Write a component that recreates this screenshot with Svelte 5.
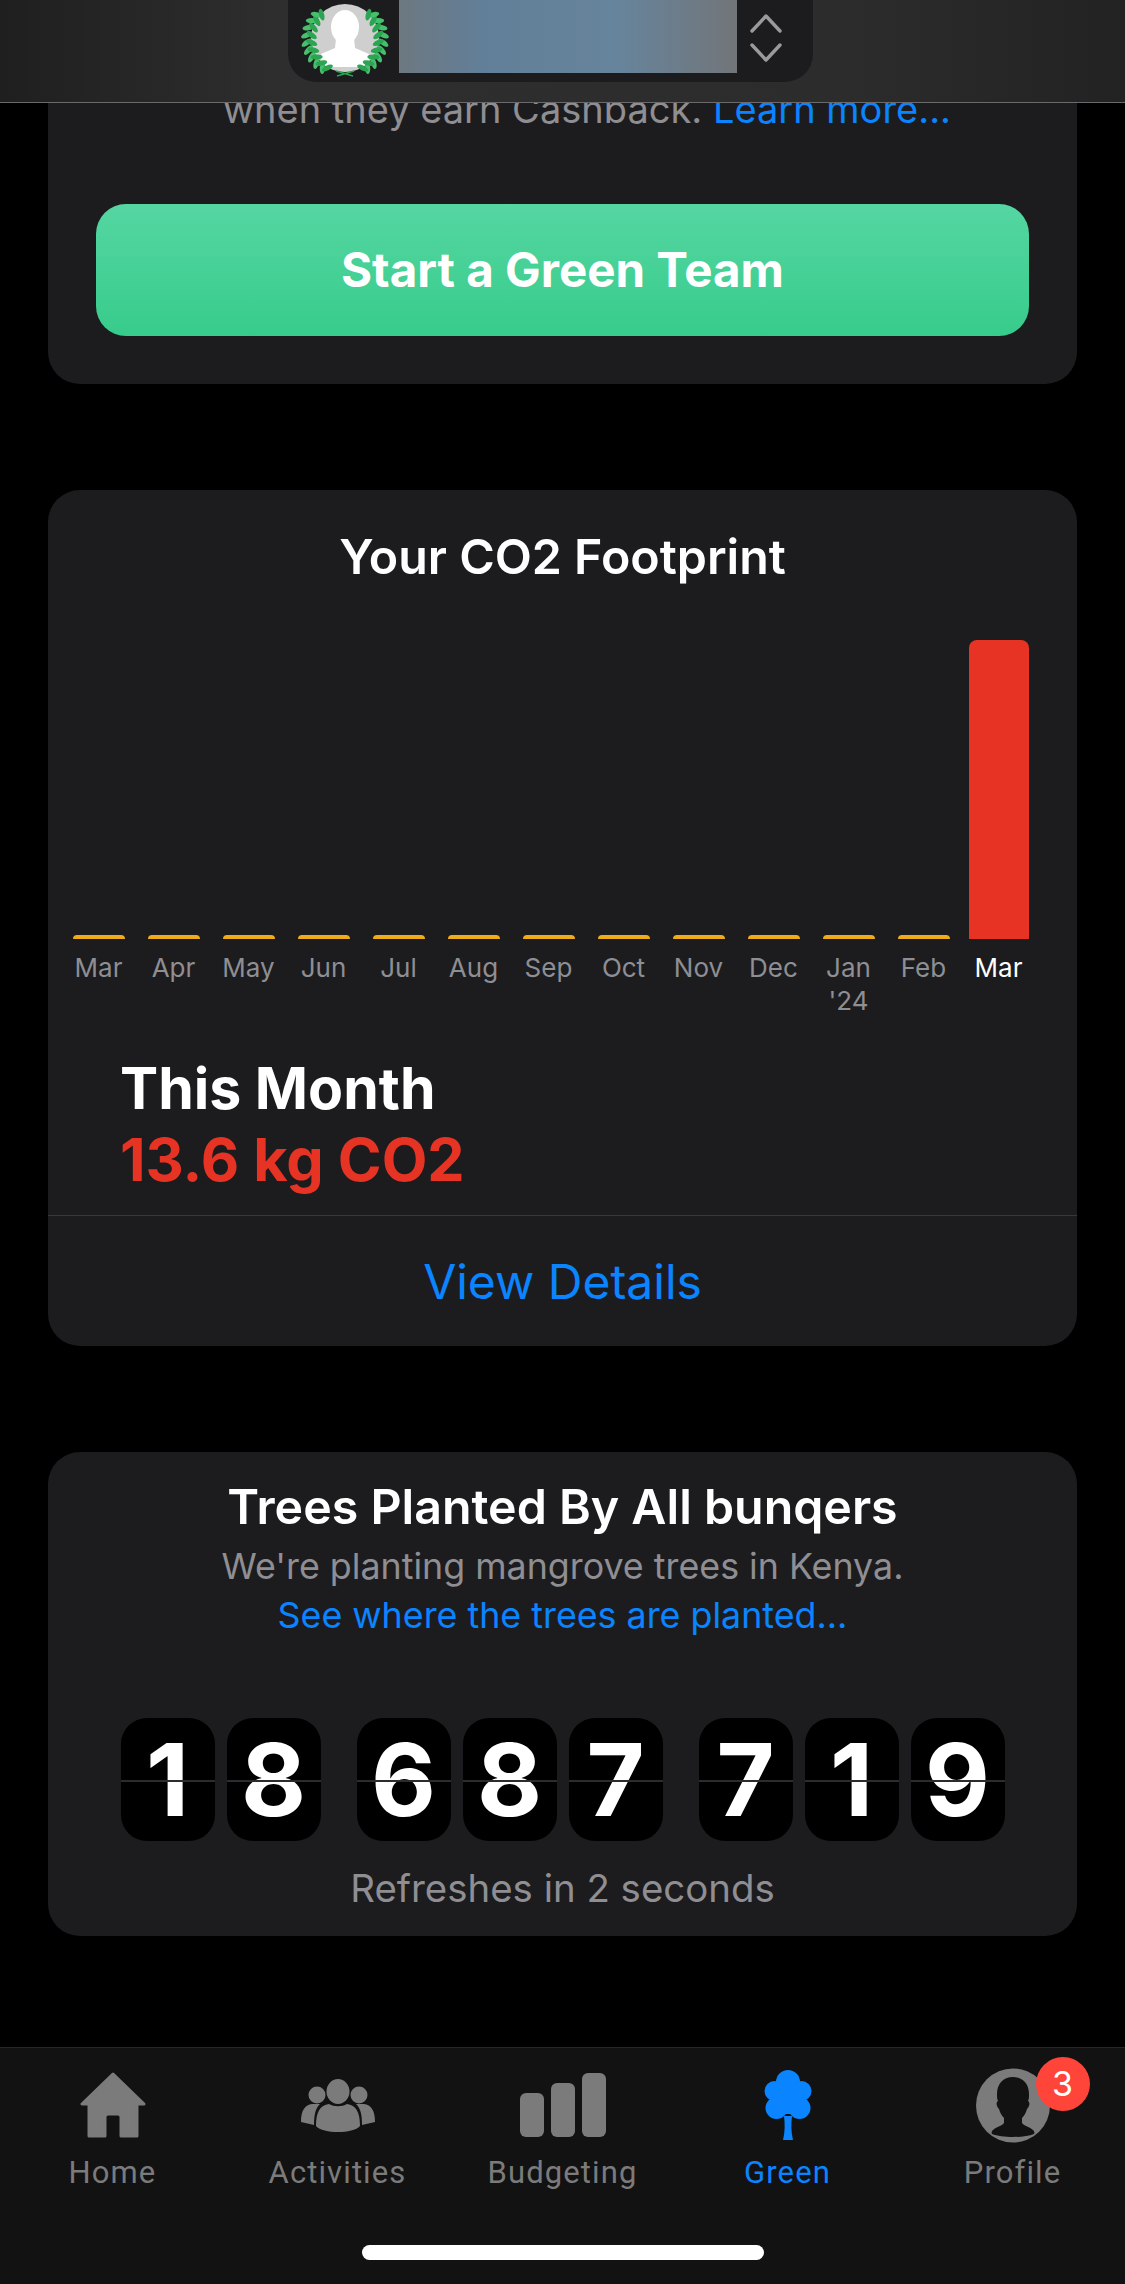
<script>
  const months = [
    { label: 'Mar' }, { label: 'Apr' }, { label: 'May' }, { label: 'Jun' }, { label: 'Jul' },
    { label: 'Aug' }, { label: 'Sep' }, { label: 'Oct' }, { label: 'Nov' }, { label: 'Dec' },
    { label: 'Jan', sub: "'24" }, { label: 'Feb' }, { label: 'Mar', current: true }
  ];

  const digitGroups = [['1', '8'], ['6', '8', '7'], ['7', '1', '9']];

  // laurel leaves on the left of the avatar (mirrored for the right), [x, y, rotation]
  const leaves = [];
  for (let i = 0; i < 9; i++) {
    const deg = 124 + i * 12.5;
    const a = (deg * Math.PI) / 180;
    const x = 45 + Math.cos(a) * 36;
    const y = 39 + Math.sin(a) * 35;
    leaves.push([x - 2.5, y, deg + 90 - 30], [x + 2.5, y, deg + 90 + 30]);
  }
</script>

<div class="page">
  <header class="top">
    <div class="switcher">
      <svg class="avatar" viewBox="0 0 90 80" width="90" height="80">
        <circle cx="45" cy="38" r="34" fill="#cfcfcf" />
        <clipPath id="avatar-clip"><circle cx="45" cy="38" r="34" /></clipPath>
        <g clip-path="url(#avatar-clip)" fill="#fff">
          <ellipse cx="45" cy="27" rx="14" ry="17" />
          <path d="M36 38h18l1 10 14 6v13H21V54l14-6z" />
        </g>
        {#each leaves as [x, y, r], i}
          <ellipse cx={x} cy={y} rx="2.6" ry="6" fill={i % 2 ? '#2ba552' : '#46c06c'} transform="rotate({r} {x} {y})" />
          <ellipse cx={90 - x} cy={y} rx="2.6" ry="6" fill={i % 2 ? '#2ba552' : '#46c06c'} transform="rotate({-r} {90 - x} {y})" />
        {/each}
        <path d="M36 71l17 5M54 71l-17 5" stroke="#2ba552" stroke-width="1.4" fill="none" />
      </svg>
      <div class="blurred"></div>
      <svg class="chevrons" viewBox="0 0 32 48" width="32" height="48">
        <path d="M2 17L16 2l14 15M2 31l14 15 14-15" fill="none" stroke="#9a9a9c" stroke-width="3.4" stroke-linecap="round" stroke-linejoin="round" />
      </svg>
    </div>
  </header>

  <main class="content">
    <section class="card invite">
      <p class="invite-text">when they earn Cashback. <span class="link">Learn more...</span></p>
      <div class="start-btn">Start a Green Team</div>
    </section>

    <section class="card footprint">
      <h2>Your CO2 Footprint</h2>
      <div class="chart">
        {#each months as m}
          <div class="col">
            <div class="bar-slot">
              <div class="bar" class:now={m.current}></div>
            </div>
            <div class="month" class:current={m.current}>{m.label}{#if m.sub}<br />{m.sub}{/if}</div>
          </div>
        {/each}
      </div>
      <div class="summary">
        <div class="summary-title">This Month</div>
        <div class="summary-value">13.6 kg CO2</div>
      </div>
      <div class="details">View Details</div>
    </section>

    <section class="card trees">
      <h2>Trees Planted By All bunqers</h2>
      <p class="sub">We're planting mangrove trees in Kenya.</p>
      <p class="link sub-link">See where the trees are planted...</p>
      <div class="counter">
        {#each digitGroups as group}
          <div class="group">
            {#each group as d}
              <div class="tile">{d}</div>
            {/each}
          </div>
        {/each}
      </div>
      <p class="refresh">Refreshes in 2 seconds</p>
    </section>
  </main>

  <nav class="tabs">
    <div class="tab-row">
      <div class="tab">
        <div class="icon">
          <svg viewBox="0 0 66 66" width="66" height="66">
            <path d="M33 2L2 32h7v32h16V45a3 3 0 0 1 3-3h10a3 3 0 0 1 3 3v19h16V32h7z" fill="#7b7b7b" stroke="#7b7b7b" stroke-width="3" stroke-linejoin="round" />
          </svg>
        </div>
        <span>Home</span>
      </div>
      <div class="tab">
        <div class="icon">
          <svg viewBox="0 0 74 53" width="74" height="53">
            <circle cx="16" cy="16" r="8.5" fill="#7b7b7b" />
            <circle cx="58" cy="16" r="8.5" fill="#7b7b7b" />
            <path d="M0 43c0-12 4-17 11-18h8c-4 4-6 9-6 21z" fill="#7b7b7b" />
            <path d="M74 43c0-12-4-17-11-18h-8c4 4 6 9 6 21z" fill="#7b7b7b" />
            <ellipse cx="37" cy="12.5" rx="11.5" ry="12.5" fill="#7b7b7b" />
            <path d="M15 47c0-14 4-21 13-22 5 3 13 3 18 0 9 1 13 8 13 22-7 8-37 8-44 0z" fill="#7b7b7b" />
          </svg>
        </div>
        <span>Activities</span>
      </div>
      <div class="tab">
        <div class="icon budget">
          <i class="b1"></i><i class="b2"></i><i class="b3"></i>
        </div>
        <span>Budgeting</span>
      </div>
      <div class="tab active">
        <div class="icon">
          <svg viewBox="0 0 48 70" width="48" height="70">
            <g fill="#0a84ff">
              <circle cx="24" cy="12" r="12" />
              <circle cx="10.5" cy="21" r="10" />
              <circle cx="37.5" cy="21" r="10" />
              <circle cx="12.5" cy="38" r="11" />
              <circle cx="35.5" cy="38" r="11" />
              <rect x="12" y="14" width="24" height="30" />
              <path d="M20 46h8c-1 8-1 16 1 24H19c2-8 2-16 1-24z" />
            </g>
          </svg>
        </div>
        <span>Green</span>
      </div>
      <div class="tab">
        <div class="icon">
          <svg viewBox="0 0 74 75" width="74" height="75">
            <circle cx="37" cy="37.5" r="37" fill="#7b7b7b" />
            <path d="M37 9c-10 0-16 7-16 17 0 3 0 5 1 7-2 1-2 5 1 8 1 4 3 7 5 9v5c-2 3-8 4-11 7-1 1-2 3-1 4 5 2 13 3 21 3s16-1 21-3c1-1 0-3-1-4-3-3-9-4-11-7v-5c2-2 4-5 5-9 3-3 3-7 1-8 1-2 1-4 1-7 0-10-6-17-16-17z" fill="#121212" />
          </svg>
          <b class="badge">3</b>
        </div>
        <span>Profile</span>
      </div>
    </div>
    <div class="home-bar"></div>
  </nav>
</div>

<style>
  :global(body) {
    margin: 0;
    background: #000;
  }

  .page {
    display: flex;
    flex-direction: column;
    width: 1125px;
    height: 2284px;
    overflow: hidden;
    background: #000;
    font-family: Inter, 'Liberation Sans', sans-serif;
    color: #fff;
  }

  .top {
    flex: none;
    display: flex;
    justify-content: center;
    height: 102px;
    padding-right: 25px;
    border-bottom: 1px solid #6a6a6c;
    background: linear-gradient(90deg, #1f1f1f, #2e2e2e 25%, #2c2c2c 75%, #222);
  }

  .switcher {
    display: flex;
    align-items: flex-start;
    width: 525px;
    height: 82px;
    padding-left: 12px;
    box-sizing: border-box;
    border-radius: 0 0 28px 28px;
    background: #1c1c1e;
  }

  .avatar {
    flex: none;
    margin-right: 9px;
  }

  .blurred {
    width: 338px;
    height: 73px;
    background: linear-gradient(90deg, #6d7880, #627f99 25%, #66849b 65%, #727579);
  }

  .chevrons {
    margin: 14px 0 0 13px;
  }

  .content {
    flex: 1;
    min-height: 0;
    overflow: hidden;
    display: flex;
    flex-direction: column;
    gap: 106px;
    padding: 0 48px;
  }

  .card {
    flex: none;
    border-radius: 32px;
    background: #1c1c1e;
  }

  .card h2 {
    margin: 0;
    font-size: 48.3px;
    line-height: 58px;
    font-weight: 600;
    text-align: center;
  }

  .link {
    color: #0a84ff;
  }

  .invite {
    margin-top: -18px;
    padding: 0 48px 48px;
    border-radius: 0 0 32px 32px;
  }

  .invite-text {
    margin: 0 0 71px;
    padding-left: 127px;
    font-size: 38px;
    line-height: 48px;
    color: #8e8e93;
    white-space: nowrap;
  }

  .start-btn {
    height: 132px;
    border-radius: 30px;
    background: linear-gradient(180deg, #55d6a2, #37cc8b);
    font-size: 47.5px;
    font-weight: 700;
    line-height: 132px;
    text-align: center;
  }

  .footprint {
    padding-top: 38px;
  }

  .chart {
    display: grid;
    grid-template-columns: repeat(13, 75px);
    margin-top: 54px;
    padding-left: 13px;
  }

  .col {
    display: flex;
    flex-direction: column;
    align-items: center;
  }

  .bar-slot {
    display: flex;
    align-items: flex-end;
    height: 299px;
  }

  .bar {
    width: 52px;
    height: 4px;
    border-radius: 6px 6px 0 0;
    background: #f0ab1a;
  }

  .bar.now {
    width: 60px;
    height: 299px;
    border-radius: 8px 8px 0 0;
    background: #e63323;
  }

  .month {
    height: 66px;
    margin-top: 12px;
    font-size: 26px;
    line-height: 33px;
    text-align: center;
    color: #8e8e93;
  }

  .month.current {
    color: #fff;
  }

  .summary {
    margin: 35px 0 19px;
    padding-left: 72px;
    line-height: 72px;
    font-weight: 700;
  }

  .summary-title {
    font-size: 57.2px;
    transform: translateY(1px);
  }

  .summary-value {
    font-size: 59.3px;
    color: #e63323;
  }

  .details {
    height: 130px;
    border-top: 1px solid #38383a;
    font-size: 48px;
    line-height: 132px;
    text-align: center;
    color: #0a84ff;
  }

  .trees {
    padding: 26px 0 24px;
    text-align: center;
  }

  .sub {
    margin: 6px 0 0;
    font-size: 35.8px;
    line-height: 48px;
    color: #8e8e93;
  }

  .sub-link {
    margin: 1px 0 0;
    font-size: 35.8px;
    line-height: 48px;
  }

  .counter {
    display: flex;
    justify-content: center;
    gap: 36px;
    margin-top: 79px;
  }

  .group {
    display: flex;
    gap: 12px;
  }

  .tile {
    position: relative;
    width: 94px;
    height: 123px;
    border-radius: 26px;
    background: #000;
    font-size: 100px;
    font-weight: 700;
    line-height: 123px;
    text-align: center;
  }

  .tile::after {
    content: '';
    position: absolute;
    left: 0;
    right: 0;
    top: 62px;
    height: 2px;
    background: #2c2c2e;
  }

  .refresh {
    margin: 23px 0 0;
    font-size: 38.4px;
    line-height: 48px;
    color: #8e8e93;
  }

  .tabs {
    flex: none;
    height: 237px;
    box-sizing: border-box;
    border-top: 1px solid #262626;
    background: #121212;
  }

  .tab-row {
    display: grid;
    grid-template-columns: repeat(5, 225px);
    padding-top: 19px;
  }

  .tab {
    display: flex;
    flex-direction: column;
    align-items: center;
    font-family: Roboto, sans-serif;
    font-size: 31px;
    line-height: 40px;
    letter-spacing: 1.1px;
    color: #7b7b7b;
  }

  .tab.active {
    color: #0a84ff;
  }

  .icon {
    position: relative;
    display: flex;
    align-items: center;
    justify-content: center;
    height: 76px;
    margin-bottom: 10px;
  }

  .budget {
    gap: 7px;
    align-items: flex-end;
  }

  .budget i {
    width: 24px;
    border-radius: 6px;
    background: #7b7b7b;
    margin-bottom: 6px;
  }

  .b1 { height: 44px; }
  .b2 { height: 54px; }
  .b3 { height: 64px; }

  .badge {
    position: absolute;
    top: -10px;
    right: -40px;
    width: 54px;
    height: 54px;
    border-radius: 50%;
    background: #ff453a;
    color: #fff;
    font-family: Inter, sans-serif;
    font-size: 34px;
    font-weight: 400;
    line-height: 54px;
    letter-spacing: 0;
    text-align: center;
  }

  .home-bar {
    width: 402px;
    height: 15px;
    margin: 52px auto 0;
    border-radius: 8px;
    background: #fff;
  }
</style>
